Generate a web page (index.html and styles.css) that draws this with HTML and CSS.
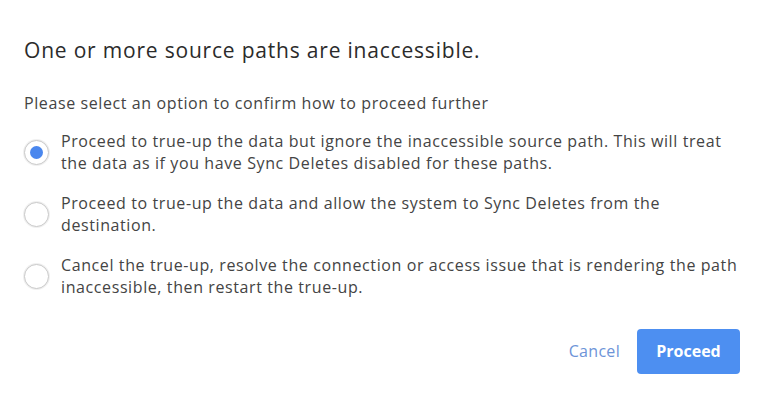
FILE: index.html
```html
<!DOCTYPE html>
<html lang="en">
<head>
    <meta charset="UTF-8">
    <meta name="viewport" content="width=device-width, initial-scale=1.0">
    <title>Inaccessible source paths</title>
    <link rel="stylesheet" href="styles.css">
</head>
<body>

    <div class="dialog">
        <h2 class="dialog-title">One or more source paths are inaccessible.</h2>

        <p class="prompt">Please select an option to confirm how to proceed further</p>

        <div class="options">
            <label class="option">
                <input type="radio" name="proceed" value="ignore" checked>
                <span class="radio"></span>
                <span class="option-text">Proceed to true-up the data but ignore the inaccessible source path. This will treat the data as if you have Sync Deletes disabled for these paths.</span>
            </label>

            <label class="option">
                <input type="radio" name="proceed" value="sync">
                <span class="radio"></span>
                <span class="option-text">Proceed to true-up the data and allow the system to Sync Deletes from the destination.</span>
            </label>

            <label class="option">
                <input type="radio" name="proceed" value="cancel">
                <span class="radio"></span>
                <span class="option-text">Cancel the true-up, resolve the connection or access issue that is rendering the path inaccessible, then restart the true-up.</span>
            </label>
        </div>

        <div class="actions">
            <button class="link-button">Cancel</button>
            <button class="blue-button">Proceed</button>
        </div>
    </div>

</body>
</html>
```

FILE: styles.css
```css
body {
    font-family: 'Open Sans', 'Noto Sans', sans-serif;
    margin: 0;
    background-color: #fff;
    color: #3a3a3a;
}

.dialog {
    padding: 36px 24px 24px 24px;
}

.dialog-title {
    margin: 0;
    font-size: 21px;
    line-height: 28px;
    letter-spacing: 0.8px;
    font-weight: normal;
    color: #2b2b2b;
}

.prompt {
    margin: 28px 0 16px 0;
    font-size: 16px;
    line-height: 22px;
    letter-spacing: 0.6px;
    color: #444;
}

.options {
    display: flex;
    flex-direction: column;
    gap: 18px;
}

.option {
    display: flex;
    align-items: center;
    gap: 12px;
    cursor: pointer;
    font-size: 16px;
    line-height: 22px;
    letter-spacing: 0.6px;
    color: #444;
}

.option input {
    display: none;
}

.radio {
    flex: none;
    width: 23px;
    height: 23px;
    border: 1px solid #c9c9c9;
    border-radius: 50%;
    box-shadow: 0 0 0 1px #f0f0f0;
    display: flex;
    align-items: center;
    justify-content: center;
    background-color: #fff;
}

.option input:checked + .radio::after {
    content: "";
    width: 13px;
    height: 13px;
    border-radius: 50%;
    background-color: #4a87ee;
}

.option-text {
    max-width: 690px;
}

.actions {
    display: flex;
    justify-content: flex-end;
    align-items: center;
    gap: 1px;
    margin-top: 30px;
}

.link-button {
    background: none;
    border: none;
    color: #6d94d8;
    font-family: 'Open Sans', 'Noto Sans', sans-serif;
    font-size: 16px;
    letter-spacing: 0.3px;
    padding: 12px 16px;
    cursor: pointer;
}

.blue-button {
    background-color: #4d8ff1;
    color: white;
    border: none;
    border-radius: 4px;
    font-family: 'Open Sans', 'Noto Sans', sans-serif;
    font-weight: bold;
    font-size: 16px;
    width: 103px;
    height: 45px;
    cursor: pointer;
}
```
